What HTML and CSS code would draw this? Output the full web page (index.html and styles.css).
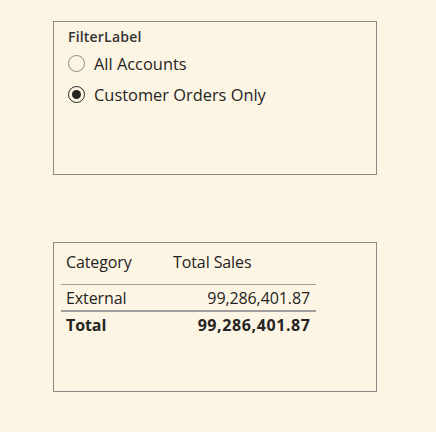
FILE: index.html
```html
<!DOCTYPE html>
<html>
<head>
<meta charset="utf-8">
<link rel="stylesheet" href="styles.css">
</head>
<body>
<div class="page">
  <div class="card slicer">
    <div class="slicer-title">FilterLabel</div>
    <div class="option">
      <span class="radio"></span>
      <span class="opt-text">All Accounts</span>
    </div>
    <div class="option">
      <span class="radio checked"></span>
      <span class="opt-text">Customer Orders Only</span>
    </div>
  </div>
  <div class="card tablecard">
    <div class="table">
      <div class="row head">
        <span class="c1">Category</span>
        <span class="c2 left">Total Sales</span>
      </div>
      <div class="row body">
        <span class="c1">External</span>
        <span class="c2">99,286,401.87</span>
      </div>
      <div class="row total">
        <span class="c1">Total</span>
        <span class="c2 num-bold">99,286,401.87</span>
      </div>
    </div>
  </div>
</div>
</body>
</html>
```
FILE: styles.css
```css
html, body {
  margin: 0;
  padding: 0;
  background: #fdf5e3;
}
body {
  font-family: "Open Sans", "Noto Sans", sans-serif;
  color: #252423;
}
.page {
  padding: 21px 0 0 53px;
  display: flex;
  flex-direction: column;
  gap: 67px;
}
.card {
  box-sizing: border-box;
  width: 324px;
  border: 1px solid #8c8a86;
}
.slicer {
  height: 154px;
  padding: 6px 0 0 14px;
}
.slicer-title {
  font-size: 14px;
  font-weight: 600;
  line-height: 18px;
  letter-spacing: 0.2px;
  color: #333;
  margin-bottom: 2px;
}
.option {
  display: flex;
  align-items: center;
  gap: 9px;
  height: 31px;
}
.radio {
  box-sizing: border-box;
  width: 17px;
  height: 17px;
  border-radius: 50%;
  border: 1px solid #8a8886;
  background: #fdf5e3;
  position: relative;
  flex: none;
}
.radio.checked {
  border: 1.5px solid #252423;
}
.radio.checked::after {
  content: "";
  position: absolute;
  left: 2.5px;
  top: 2.5px;
  width: 9px;
  height: 9px;
  border-radius: 50%;
  background: #252423;
}
.opt-text {
  font-size: 16.4px;
  color: #252423;
}
.tablecard {
  height: 150px;
  padding: 8px 0 0 7px;
}
.table {
  width: 255px;
}
.row {
  display: flex;
  align-items: center;
  font-size: 16px;
  letter-spacing: -0.1px;
}
.row .c1 {
  padding-left: 5px;
  width: 107px;
}
.row .c2 {
  flex: 1;
  text-align: right;
  padding-right: 6px;
}
.row .c2.left { text-align: left; }
.row .c2.num-bold {
  letter-spacing: 0.6px;
  padding-right: 5.4px;
}
.head {
  height: 33px;
  align-items: flex-start;
  line-height: 22px;
  border-bottom: 1px solid #a19f9d;
}
.body {
  height: 25px;
  border-bottom: 2px solid #a19f9d;
}
.total {
  height: 26px;
  font-weight: 700;
}
```
